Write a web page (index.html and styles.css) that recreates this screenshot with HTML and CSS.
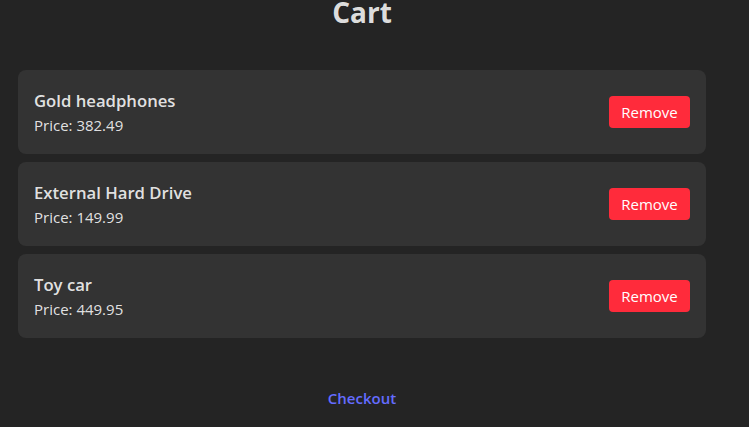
FILE: index.html
```html
<!DOCTYPE html>
<html>
<head>
<meta charset="utf-8">
<link rel="stylesheet" href="styles.css">
</head>
<body>
<div class="page">
  <h1 class="title">Cart</h1>
  <div class="list">
    <div class="card">
      <div class="info">
        <div class="name">Gold headphones</div>
        <div class="price">Price: 382.49</div>
      </div>
      <button class="remove">Remove</button>
    </div>
    <div class="card">
      <div class="info">
        <div class="name">External Hard Drive</div>
        <div class="price">Price: 149.99</div>
      </div>
      <button class="remove">Remove</button>
    </div>
    <div class="card">
      <div class="info">
        <div class="name">Toy car</div>
        <div class="price">Price: 449.95</div>
      </div>
      <button class="remove">Remove</button>
    </div>
  </div>
  <div class="footer"><a class="checkout" href="#">Checkout</a></div>
</div>
</body>
</html>
```
FILE: styles.css
```css
html, body {
  margin: 0;
  padding: 0;
  background: #242424;
}
body {
  font-family: "Open Sans", "Noto Sans", sans-serif;
  color: rgba(255,255,255,0.87);
  overflow: hidden;
}
.page {
  width: 688px;
  padding: 0 18px;
}
.title {
  margin: 0;
  height: 24px;
  line-height: 24px;
  text-align: center;
  font-size: 28px;
  font-weight: 700;
}
.list {
  margin-top: 46px;
  display: flex;
  flex-direction: column;
  gap: 8px;
}
.card {
  background: #333333;
  border-radius: 8px;
  height: 84px;
  box-sizing: border-box;
  padding: 0 16px;
  display: flex;
  align-items: center;
  justify-content: space-between;
}
.info {
  display: flex;
  flex-direction: column;
  gap: 3px;
}
.name {
  font-size: 16.7px;
  font-weight: 600;
  line-height: 23px;
}
.price {
  font-size: 15px;
  line-height: 21px;
}
.remove {
  background: #ff2b3b;
  color: #fff;
  border: none;
  border-radius: 4px;
  width: 81px;
  height: 32px;
  font-family: inherit;
  font-size: 15px;
  padding: 0;
}
.footer {
  margin-top: 49px;
  text-align: center;
}
.checkout {
  color: #646cff;
  font-weight: 600;
  font-size: 15px;
  text-decoration: none;
}
```
